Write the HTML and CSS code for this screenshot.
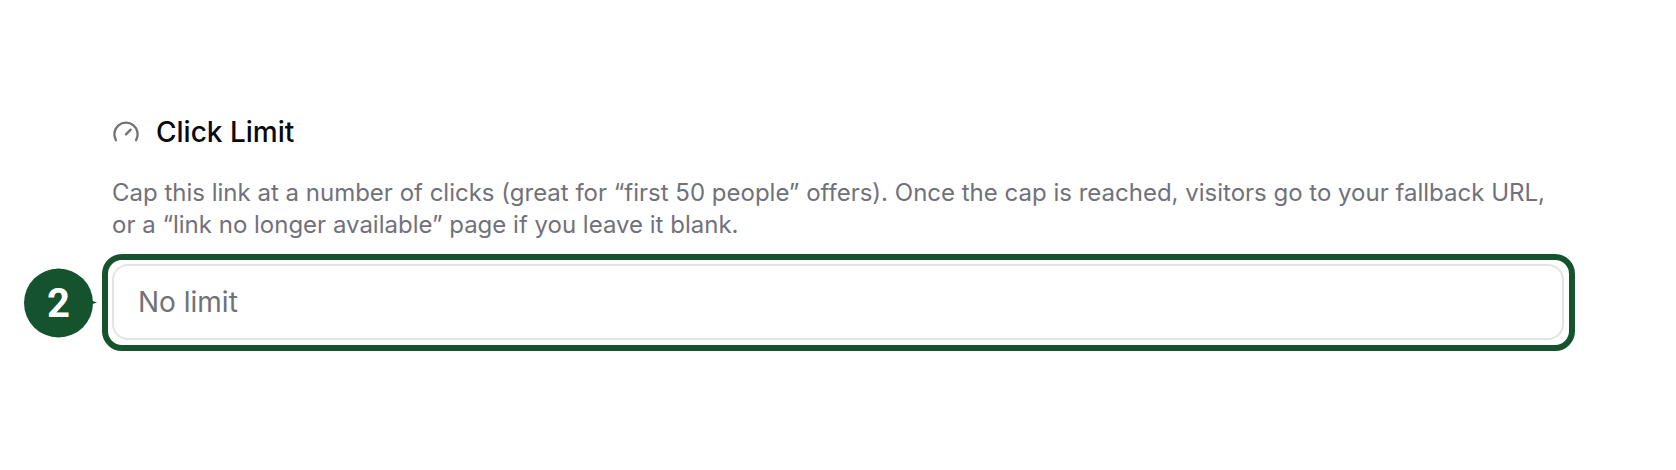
FILE: index.html
```html
<!DOCTYPE html>
<html lang="en">
<head>
<meta charset="utf-8">
<meta name="viewport" content="width=device-width, initial-scale=1">
<title>Click Limit</title>
<link rel="stylesheet" href="styles.css">
</head>
<body>
<main class="setting">
  <div class="setting-header">
    <svg class="setting-icon" viewBox="0 0 24 24" aria-hidden="true">
      <path d="m12 14 4-4"/>
      <path d="M3.34 19a10 10 0 1 1 17.32 0"/>
    </svg>
    <label class="setting-title" for="click-limit">Click Limit</label>
  </div>
  <p class="setting-help" id="click-limit-help">Cap this link at a number of clicks (great for “first 50 people” offers). Once the cap is reached, visitors go to your fallback URL, or a “link no longer available” page if you leave it blank.</p>
  <div class="highlight">
    <div class="callout">
      <span class="callout-number">2</span>
      <svg class="callout-tip" viewBox="0 0 6 4" aria-hidden="true"><path d="M0 0 6 2 0 4z"/></svg>
    </div>
    <input class="field" id="click-limit" type="text" inputmode="numeric" placeholder="No limit" aria-describedby="click-limit-help">
  </div>
</main>
</body>
</html>
```

FILE: styles.css
```css
* {
  box-sizing: border-box;
}

body {
  margin: 0;
  background: #fff;
  font-family: Inter, "Liberation Sans", sans-serif;
}

.setting {
  padding: 112px;
}

.setting-header {
  display: flex;
  align-items: center;
  gap: 16px;
}

.setting-icon {
  width: 28px;
  height: 28px;
  fill: none;
  stroke: #71717a;
  stroke-width: 2;
  stroke-linecap: round;
  stroke-linejoin: round;
}

.setting-title {
  color: #09090b;
  font-size: 28px;
  font-weight: 500;
  line-height: 40px;
}

.setting-help {
  margin: 25px 0 13px;
  color: #71717a;
  font-size: 24px;
  line-height: 32px;
}

.highlight {
  position: relative;
  margin: 0 -11px 0 -10px;
  padding: 4px 5px 5px 4px;
  border: 6px solid #14532d;
  border-radius: 20px;
}

.field {
  display: block;
  width: 100%;
  height: 76px;
  padding: 0 24px;
  border: 2px solid #e4e4e4;
  border-radius: 16px;
  outline: none;
  background: transparent;
  color: #09090b;
  font: inherit;
  font-size: 28px;
}

.field::placeholder {
  color: #71717a;
  opacity: 1;
}

/* Numbered marker beside the highlighted field */
.callout {
  position: absolute;
  top: 50%;
  right: 100%;
  display: flex;
  align-items: center;
  margin-right: 11px;
  transform: translateY(-50%);
}

.callout-number {
  display: flex;
  align-items: center;
  justify-content: center;
  width: 69px;
  height: 69px;
  border-radius: 50%;
  background: #14532d;
  color: #fff;
  font-family: Roboto, "Liberation Sans", sans-serif;
  font-size: 40px;
  font-weight: 700;
}

.callout-tip {
  width: 6px;
  height: 4px;
  margin-left: -2px;
  fill: #14532d;
}
```
